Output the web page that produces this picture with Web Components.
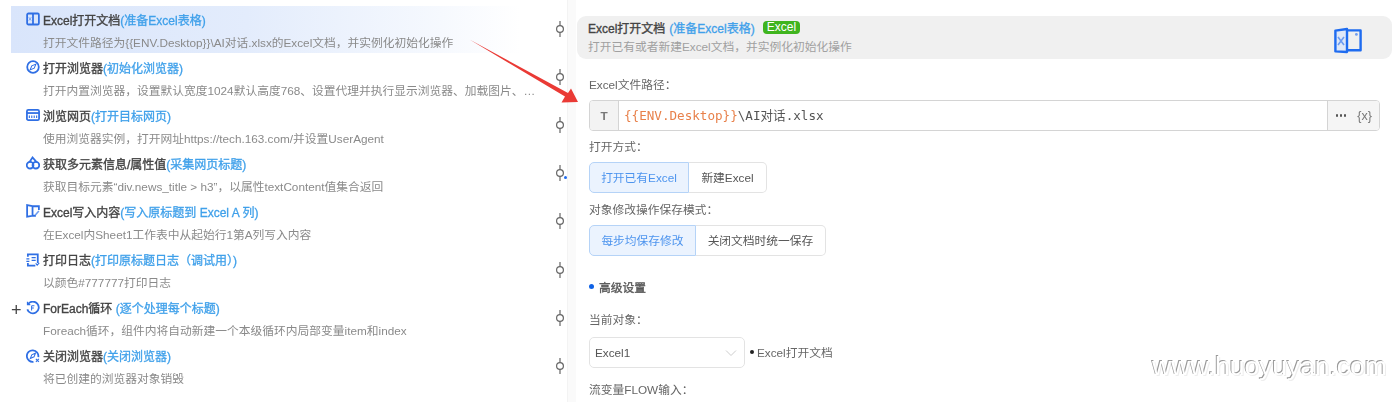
<!DOCTYPE html>
<html lang="zh-CN">
<head>
<meta charset="utf-8">
<title>Excel打开文档</title>
<style>
  html, body { margin: 0; padding: 0; background: #fff; }
  body {
    width: 1400px;
    height: 402px;
    overflow: hidden;
    font-family: "Liberation Sans", "Noto Sans CJK SC", sans-serif;
    font-size: 11.75px;
    color: #555;
  }
</style>
</head>
<body>
<flow-app>
  <step-list slot="list">
    <step-item active title-text="Excel打开文档" note="(准备Excel表格)" desc="打开文件路径为{{ENV.Desktop}}\AI对话.xlsx的Excel文档，并实例化初始化操作">
      <svg slot="icon" viewBox="0 0 15 15" fill="none" stroke="#2f6fe4"><rect x="1.2" y="1.6" width="12.6" height="11.8" rx="1.4"/><path d="M7.5 1.6v11.8"/><path d="M3 5.6l2.6 3.6M5.6 5.6 3 9.2" stroke-width=".9" stroke="#6d9cf0"/></svg>
    </step-item>
    <step-item title-text="打开浏览器" note="(初始化浏览器)" desc="打开内置浏览器，设置默认宽度1024默认高度768、设置代理并执行显示浏览器、加载图片、…">
      <svg slot="icon" viewBox="0 0 15 15" fill="none" stroke="#2f6fe4"><circle cx="7.5" cy="7.5" r="6.2"/><path d="M10.6 4.4 8.8 8.8 4.4 10.6 6.2 6.2z" stroke-width="1.1"/></svg>
    </step-item>
    <step-item title-text="浏览网页" note="(打开目标网页)" desc="使用浏览器实例，打开网址https://tech.163.com/并设置UserAgent">
      <svg slot="icon" viewBox="0 0 15 15" fill="none" stroke="#2f6fe4"><rect x="1" y="2" width="13" height="11" rx="1.5"/><path d="M1 5.4h13"/><path d="M3.6 8v2.6M6.2 8v2.6M8.8 8v2.6M11.4 8v2.6" stroke-width="1.2"/></svg>
    </step-item>
    <step-item linked title-text="获取多元素信息/属性值" note="(采集网页标题)" desc="获取目标元素“div.news_title &gt; h3”，以属性textContent值集合返回">
      <svg slot="icon" viewBox="0 0 15 15" fill="none" stroke="#2f6fe4"><circle cx="4.4" cy="9.8" r="3.6"/><circle cx="10.6" cy="9.8" r="3.6"/><path d="M3.6 6.6 7 1.6l4.4 5"/></svg>
    </step-item>
    <step-item title-text="Excel写入内容" note="(写入原标题到 Excel A 列)" desc="在Excel内Sheet1工作表中从起始行1第A列写入内容">
      <svg slot="icon" viewBox="0 0 15 15" fill="none" stroke="#2f6fe4"><path d="M7 2.2 1.2 1.2v12.4l5.8-1zM7 2.4h6.8v4M7 12.6h3.6"/><path d="m13.8 7.4-3.8 4.4" stroke="#6d9cf0" stroke-width="1.7"/></svg>
    </step-item>
    <step-item title-text="打印日志" note="(打印原标题日志（调试用）)" desc="以颜色#777777打印日志">
      <svg slot="icon" viewBox="0 0 15 15" fill="none" stroke="#2f6fe4"><path d="M2 4V1.4h10.6v9.4M2 10.6v3h8"/><path d="M.4 6.4h3.2M.4 9h3.2M6 5h4.4M6 8h4.4" stroke-width="1.3"/><path d="m10.4 11 1.6 2 2.2-2.4" stroke-width="1.2"/></svg>
    </step-item>
    <step-item expand title-text="ForEach循环" note=" (逐个处理每个标题)" desc="Foreach循环，组件内将自动新建一个本级循环内局部变量item和index">
      <svg slot="icon" viewBox="0 0 15 15" fill="none" stroke="#2f6fe4"><path d="M2.3 3.2A6.3 6.3 0 1 1 1.4 9"/><path d="M1.6 .8v3h3" stroke-width="1.3"/><path d="M6 5.2h3M6 5.2v5M6 7.6h2.4" stroke-width="1.1"/></svg>
    </step-item>
    <step-item title-text="关闭浏览器" note="(关闭浏览器)" desc="将已创建的浏览器对象销毁">
      <svg slot="icon" viewBox="0 0 15 15" fill="none" stroke="#2f6fe4"><path d="M13.2 8.6A6.2 6.2 0 1 0 8 13.7"/><path d="M10.2 4.4 8.6 8.4 4.6 10.2 6.2 6.2z" stroke-width="1.1"/><path d="m10.6 10.6 3.2 3.2m0-3.2-3.2 3.2" stroke-width="1.2"/></svg>
    </step-item>
  </step-list>

  <config-panel slot="panel">
    <panel-header slot="header" title-text="Excel打开文档" note="(准备Excel表格)" badge="Excel" desc="打开已有或者新建Excel文档，并实例化初始化操作"></panel-header>

    <form-field label="Excel文件路径：" style="margin-top:16px">
      <path-input></path-input>
    </form-field>

    <form-field label="打开方式：" style="margin-top:6px">
      <seg-group options="打开已有Excel|新建Excel" widths="100|78"></seg-group>
    </form-field>

    <form-field label="对象修改操作保存模式：" style="margin-top:7px">
      <seg-group options="每步均保存修改|关闭文档时统一保存" widths="107|130"></seg-group>
    </form-field>

    <section-title style="margin-top:20px">高级设置</section-title>

    <form-field label="当前对象：" style="margin-top:14px;--gap:7px">
      <object-select value="Excel1" hint="Excel打开文档"></object-select>
    </form-field>

    <form-field label="流变量FLOW输入：" style="margin-top:12px"></form-field>
  </config-panel>
</flow-app>

<script>
class FlowApp extends HTMLElement {
  constructor() {
    super();
    this.attachShadow({ mode: 'open' }).innerHTML = `
      <style>
        :host { display: flex; position: relative; width: 1400px; height: 402px; overflow: hidden; }
        .left { width: 567px; flex: none; filter: blur(.3px); }
        .split { width: 9px; flex: none; background: #fafafa; border-left: 1px solid #f3f3f3; box-sizing: border-box; }
        .right { flex: 1; min-width: 0; filter: blur(.3px); }
        .arrow { position: absolute; left: 0; top: 0; pointer-events: none; }
        .mark {
          position: absolute; left: 1152px; top: 348px;
          font: 26.4px/36px "Liberation Sans", sans-serif;
          color: #fff;
          text-shadow: -1px -1px 0 #999, 1px 1px 0 #eee;
          white-space: nowrap;
        }
      </style>
      <div class="left"><slot name="list"></slot></div>
      <div class="split"></div>
      <div class="right"><slot name="panel"></slot></div>
      <svg class="arrow" width="1400" height="402"><polygon points="469.5,39.5 568,93 571,88.5 578,102 561.5,102.5 565,96.5" fill="#ea3a35"/></svg>
      <div class="mark">www.huoyuyan.com</div>
    `;
  }
}

class StepList extends HTMLElement {
  constructor() {
    super();
    this.attachShadow({ mode: 'open' }).innerHTML = `
      <style>:host { display: block; padding-top: 5px; }</style>
      <slot></slot>
    `;
  }
}

class StepItem extends HTMLElement {
  constructor() {
    super();
    this.attachShadow({ mode: 'open' });
  }

  connectedCallback() {
    const title = this.getAttribute('title-text');
    const note = this.getAttribute('note');
    const desc = this.getAttribute('desc');
    this.shadowRoot.innerHTML = `
      <style>
        :host { display: flex; align-items: center; height: 48.1px; }
        .body {
          position: relative; width: 525px; height: 47px; margin-left: 11px; flex: none;
          box-sizing: border-box; padding-left: 14px;
        }
        :host([active]) .body { background: linear-gradient(90deg, #d9e5fb 0%, #e3ecfc 45%, #f6f9fe 82%, #fff 97%); }
        .head { display: flex; align-items: center; height: 27px; font-size: 12px; }
        .icon { width: 18px; flex: none; display: flex; }
        ::slotted(svg) { width: 14px; height: 14px; margin: 0 0 0 .5px; stroke-width: 1.9; }
        .title { color: #444; -webkit-text-stroke: .35px #444; white-space: pre; }
        .note { color: #3fa0ea; -webkit-text-stroke: .3px #3fa0ea; white-space: pre; }
        .desc { color: #8a8a8a; padding-left: 18px; line-height: 20px; white-space: nowrap; }
        .plus { position: absolute; left: 0; top: 7px; font: 400 18px/18px "Liberation Sans", sans-serif; color: #444; }
        .pin { position: relative; width: 10px; margin-left: 19px; flex: none; display: flex; }
        .dot { position: absolute; left: 9px; top: 12px; width: 3px; height: 3px; border-radius: 50%; background: #1f6cf0; }
      </style>
      <div class="body">
        ${this.hasAttribute('expand') ? '<span class="plus">+</span>' : ''}
        <div class="head">
          <span class="icon"><slot name="icon"></slot></span>
          <span class="title">${title}</span><span class="note">${note}</span>
        </div>
        <div class="desc">${desc}</div>
      </div>
      <span class="pin">
        <svg width="10" height="18" viewBox="0 0 10 18" fill="none" stroke="#666" stroke-width="1.2"><path d="M5 1v4.6M5 12.4V17"/><circle cx="5" cy="9" r="3.4"/></svg>
        ${this.hasAttribute('linked') ? '<i class="dot"></i>' : ''}
      </span>
    `;
  }
}

class ConfigPanel extends HTMLElement {
  constructor() {
    super();
    this.attachShadow({ mode: 'open' }).innerHTML = `
      <style>
        :host { display: block; padding: 16px 8px 0 1px; }
        .fields { padding: 0 12px; }
      </style>
      <slot name="header"></slot>
      <div class="fields"><slot></slot></div>
    `;
  }
}

class PanelHeader extends HTMLElement {
  constructor() {
    super();
    this.attachShadow({ mode: 'open' });
  }

  connectedCallback() {
    this.shadowRoot.innerHTML = `
      <style>
        :host {
          display: flex; justify-content: space-between;
          height: 43px; box-sizing: border-box; background: #f0f0f0; border-radius: 9px;
          padding: 3px 30px 0 11px;
        }
        .top { display: flex; align-items: center; height: 17px; font-size: 12px; }
        .title { color: #444; -webkit-text-stroke: .35px #444; }
        .note { color: #3fa0ea; -webkit-text-stroke: .3px #3fa0ea; margin-left: 4px; }
        .badge {
          margin-left: 8px; background: #3fb41e; color: #fff; height: 13px; line-height: 13px;
          padding: 0 4px; border-radius: 4px; font-size: 12px; margin-top: -1px;
        }
        .desc { color: #a0a0a0; line-height: 20px; margin-top: 1px; }
        svg { margin-top: 7px; }
      </style>
      <div>
        <div class="top">
          <span class="title">${this.getAttribute('title-text')}</span>
          <span class="note">${this.getAttribute('note')}</span>
          <span class="badge">${this.getAttribute('badge')}</span>
        </div>
        <div class="desc">${this.getAttribute('desc')}</div>
      </div>
      <svg width="28" height="28" viewBox="0 0 28 28" fill="none" stroke="#1f6cf0" stroke-width="2.4"><path d="M13 3 1.4 4.6v20.8L13 26z" fill="#dfe8f8" stroke-linejoin="round"/><path d="M13 4.4h13.6v19.8H13" stroke-linejoin="round"/><circle cx="22.4" cy="8.4" r="1.4" fill="#6d9cf0" stroke="none"/><path d="m4 11 6 8M10 11l-6 8" stroke="#6d9cf0" stroke-width="1.6"/></svg>
    `;
  }
}

class FormField extends HTMLElement {
  constructor() {
    super();
    this.attachShadow({ mode: 'open' });
  }

  connectedCallback() {
    const label = this.getAttribute('label').replace('：', '<span class="colon">：</span>');
    this.shadowRoot.innerHTML = `
      <style>
        :host { display: block; }
        .label { height: 20px; line-height: 18px; color: #666; }
        .colon { font-family: "Noto Sans CJK TC", sans-serif; }
        .ctl { margin-top: var(--gap, 5px); }
      </style>
      <div class="label">${label}</div>
      ${this.children.length ? '<div class="ctl"><slot></slot></div>' : ''}
    `;
  }
}

class PathInput extends HTMLElement {
  constructor() {
    super();
    this.attachShadow({ mode: 'open' }).innerHTML = `
      <style>
        :host {
          display: flex; height: 31px; box-sizing: border-box;
          border: 1px solid #d4d4d4; border-radius: 4px; overflow: hidden;
        }
        .type { width: 28px; flex: none; display: flex; align-items: center; justify-content: center; background: #f3f3f3; border-right: 1px solid #d4d4d4; color: #777; font-weight: 700; }
        .val { flex: 1; padding-left: 5px; font: 12.6px/29px "DejaVu Sans Mono", "Noto Sans CJK SC", monospace; color: #555; white-space: nowrap; }
        .env { color: #e8804a; }
        .tools { width: 52px; flex: none; display: flex; align-items: center; background: #f5f5f5; border-left: 1px solid #d4d4d4; box-sizing: border-box; padding-left: 8px; }
        .dots { display: flex; gap: 1.6px; }
        .dots i { width: 2.4px; height: 2.4px; border-radius: 50%; background: #555; }
        .x { font: 12.5px "Liberation Sans", sans-serif; margin-left: 11px; color: #777; }
      </style>
      <span class="type">T</span>
      <span class="val"><span class="env">{{ENV.Desktop}}</span>\\AI对话.xlsx</span>
      <span class="tools"><span class="dots"><i></i><i></i><i></i></span><span class="x">{x}</span></span>
    `;
  }
}

class SegGroup extends HTMLElement {
  constructor() {
    super();
    this.attachShadow({ mode: 'open' });
  }

  connectedCallback() {
    const opts = this.getAttribute('options').split('|');
    const widths = this.getAttribute('widths').split('|');
    this.shadowRoot.innerHTML = `
      <style>
        :host { display: flex; height: 31px; }
        span {
          display: flex; align-items: center; justify-content: center; box-sizing: border-box;
          border: 1px solid #e3e3e3; border-left: 0; color: #555; white-space: nowrap; padding-bottom: 2px;
        }
        span:last-child { border-radius: 0 5px 5px 0; }
        span.on {
          background: #ebf3fe; border: 1px solid #b5d3f7; color: #4d94ee; border-radius: 5px 0 0 5px;
        }
      </style>
      ${opts.map((o, i) => `<span class="${i === 0 ? 'on' : ''}" style="width:${widths[i]}px">${o}</span>`).join('')}
    `;
  }
}

class SectionTitle extends HTMLElement {
  constructor() {
    super();
    this.attachShadow({ mode: 'open' }).innerHTML = `
      <style>
        :host { display: flex; align-items: center; height: 20px; color: #555; -webkit-text-stroke: .35px #555; }
        i { width: 5px; height: 5px; border-radius: 50%; background: #0f62e6; margin-right: 5px; }
      </style>
      <i></i><slot></slot>
    `;
  }
}

class ObjectSelect extends HTMLElement {
  constructor() {
    super();
    this.attachShadow({ mode: 'open' });
  }

  connectedCallback() {
    this.shadowRoot.innerHTML = `
      <style>
        :host { display: flex; align-items: center; height: 31px; }
        .box {
          width: 156px; height: 31px; box-sizing: border-box; border: 1px solid #e3e3e3; border-radius: 5px;
          display: flex; align-items: center; justify-content: space-between; padding: 0 7px 0 5px; color: #555;
        }
        .hint { display: flex; align-items: center; margin-left: 5px; margin-top: -2px; color: #666; }
        .hint i { width: 4px; height: 4px; border-radius: 50%; background: #222; margin-right: 3px; }
      </style>
      <div class="box">
        <span>${this.getAttribute('value')}</span>
        <svg width="12" height="8" viewBox="0 0 12 8" fill="none" stroke="#ccc" stroke-width="1"><path d="m1 1.5 5 5 5-5"/></svg>
      </div>
      <div class="hint"><i></i>${this.getAttribute('hint')}</div>
    `;
  }
}

customElements.define('flow-app', FlowApp);
customElements.define('step-list', StepList);
customElements.define('step-item', StepItem);
customElements.define('config-panel', ConfigPanel);
customElements.define('panel-header', PanelHeader);
customElements.define('form-field', FormField);
customElements.define('path-input', PathInput);
customElements.define('seg-group', SegGroup);
customElements.define('section-title', SectionTitle);
customElements.define('object-select', ObjectSelect);
</script>
</body>
</html>
